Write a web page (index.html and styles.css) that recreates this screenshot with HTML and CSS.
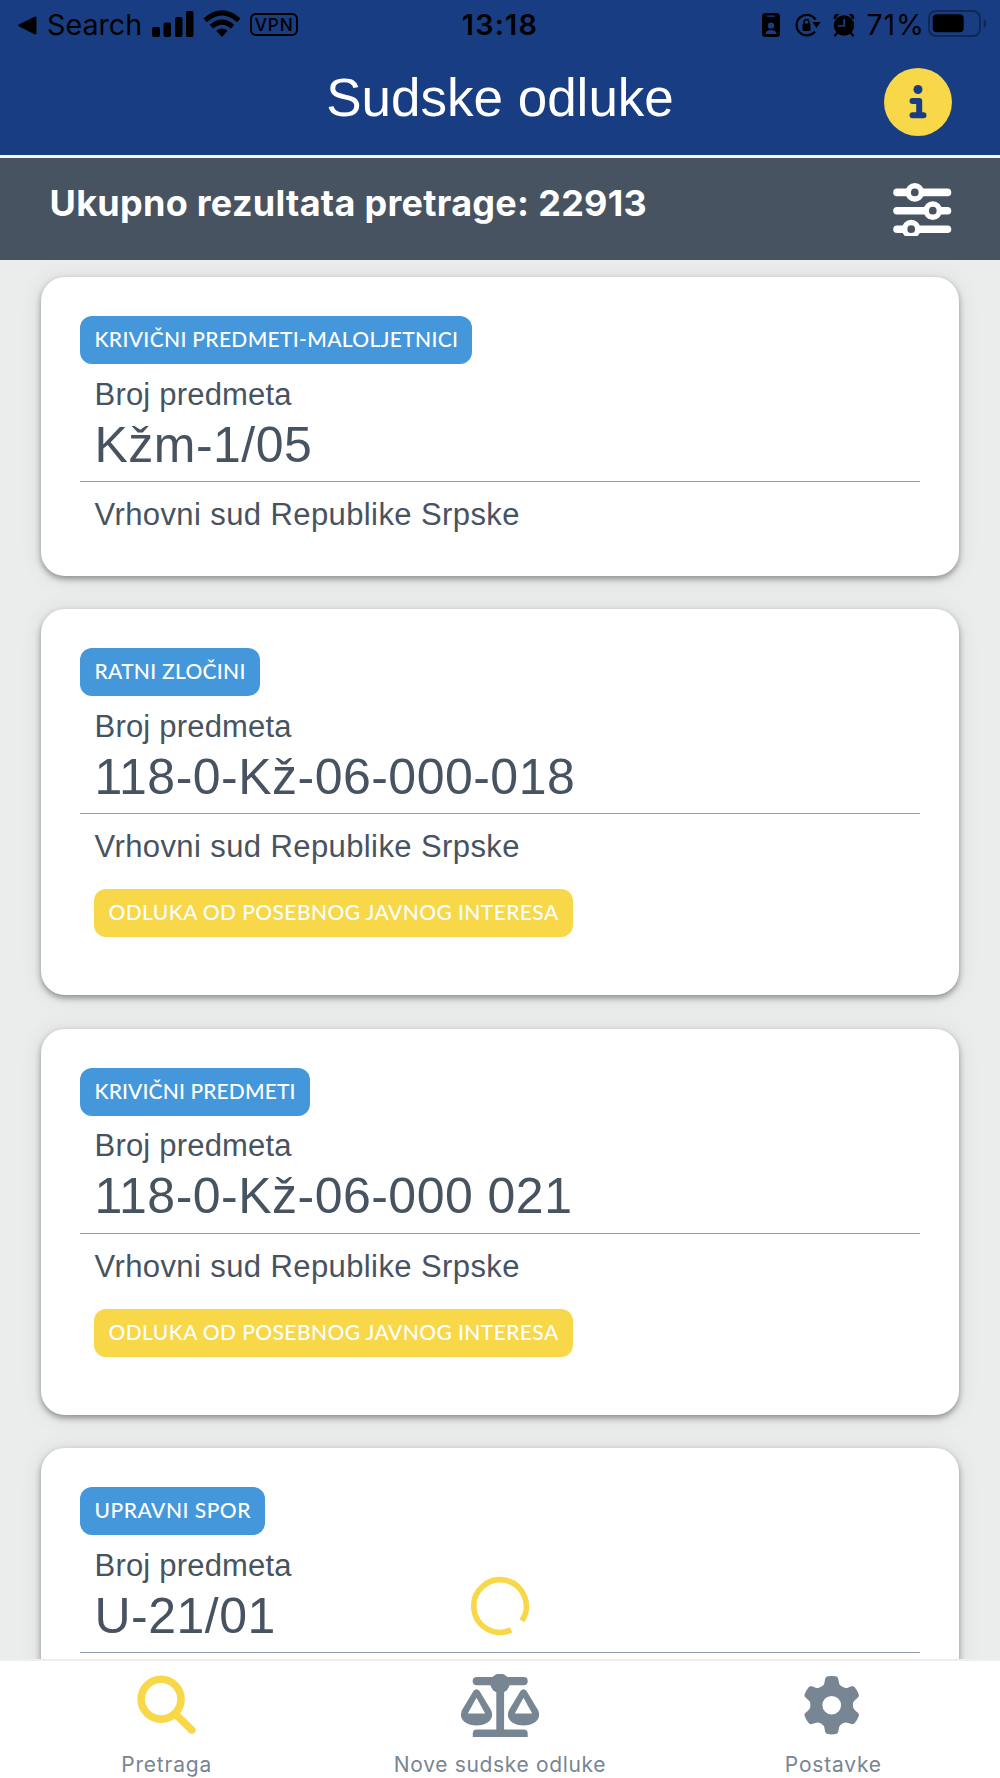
FILE: index.html
```html
<!DOCTYPE html>
<html lang="bs">
<head>
<meta charset="utf-8">
<title>Sudske odluke</title>
<link rel="stylesheet" href="styles.css">
</head>
<body>
<div class="app">
  <header class="header">
    <div class="status">
      <div class="status-left">
        <svg class="back" width="19" height="19" viewBox="0 0 19 19"><path d="M1.2 8.3 16.5.8Q18.5 0 18.5 2V17Q18.5 19 16.5 18.2L1.2 10.5Q-.6 9.4 1.2 8.3Z"/></svg>
        <span class="search">Search</span>
        <svg class="signal" width="42" height="27" viewBox="0 0 42 27"><rect x="0" y="16" width="8" height="10" rx="2"/><rect x="11.5" y="11.5" width="7.5" height="14.5" rx="2"/><rect x="23" y="6" width="7.5" height="20" rx="2"/><rect x="34" y="0" width="7.5" height="26" rx="2"/></svg>
        <svg class="wifi" width="38" height="27" viewBox="0 0 38 27"><g fill="none" stroke="#000" stroke-width="5.2"><path d="M2.2 10.4Q19-4.6 35.8 10.4"/><path d="M8.4 16.8Q19 7.4 29.6 16.8"/></g><path d="M13.3 20.8Q19 16.2 24.7 20.8L20 26Q19 27 18 26Z"/></svg>
        <span class="vpn">VPN</span>
      </div>
      <div class="time">13:18</div>
      <div class="status-right">
        <svg width="18" height="24" viewBox="0 0 18 24"><rect width="18" height="24" rx="3.5"/><rect x="5" y="2.5" width="8" height="1.3" rx=".6" fill="#193d82"/><circle cx="9" cy="12.6" r="3.2" fill="#193d82"/><path d="M3.5 21Q4 17 9 17T14.500 21Z" fill="#193d82"/></svg>
        <svg class="lock" width="26" height="24" viewBox="0 0 26 24"><path d="M20.500 6.500A10.300 10.300 0 1 0 20 18.500" fill="none" stroke="#000" stroke-width="2.200"/><path d="M17.500 9H25.500L21.500 15Z"/><rect x="7.500" y="10.500" width="8" height="7.500" rx="1.200"/><path d="M9.200 11V8.700a2.300 2.300 0 0 1 4.600 0V11" fill="none" stroke="#000" stroke-width="1.500"/></svg>
        <svg class="alarm" width="22" height="24" viewBox="0 0 22 24"><circle cx="11" cy="12.500" r="10.200"/><path d="M.8 6Q-.2 1 5 .8L6 1.600 1.700 6.600ZM21.200 6Q22.200 1 17 .8L16 1.600 20.300 6.600Z"/><path d="m4.500 19.500-2.500 3m15.500-3 2.500 3" stroke="#000" stroke-width="2.200" stroke-linecap="round"/><path d="M11.200 6.500V13H5.500" fill="none" stroke="#193d82" stroke-width="1.700" stroke-linecap="round"/></svg>
        <span class="percent">71%</span>
        <svg class="battery" width="59" height="28" viewBox="0 0 59 28"><rect x="1" y="1" width="51" height="25" rx="7" fill="none" stroke="#0f2855" stroke-width="2"/><rect x="4.700" y="4.300" width="31" height="18" rx="4"/><path d="M55.700 9Q58.500 10.500 58.500 13.500T55.700 18.500Z" fill="#0f2855"/></svg>
      </div>
    </div>
    <div class="titlebar">
      <h1>Sudske odluke</h1>
      <svg class="info" width="68" height="68" viewBox="0 0 68 68"><circle cx="34" cy="34" r="34" fill="#f8d748"/><circle cx="34" cy="21.500" r="4.500" fill="#193d82"/><path d="M28.500 33H35.200V47.300M28.500 47.300H39.500" fill="none" stroke="#193d82" stroke-width="6" stroke-linecap="round" stroke-linejoin="round"/></svg>
    </div>
  </header>

  <section class="summary">
    <h2>Ukupno rezultata pretrage: 22913</h2>
    <svg class="filter" width="59" height="53" viewBox="0 0 59 53"><g stroke="#fff" stroke-width="7.600" stroke-linecap="round"><path d="M4 9.400H54.500M4 27.700H54.500M4 46.200H54.500"/></g><g fill="#475361" stroke="#fff" stroke-width="5.500"><circle cx="21.800" cy="9.400" r="6.600"/><circle cx="39.800" cy="27.700" r="6.600"/><circle cx="18.200" cy="46.200" r="6.600"/></g></svg>
  </section>

  <main class="list">
    <article class="card">
      <span class="badge">KRIVIČNI PREDMETI-MALOLJETNICI</span>
      <div class="case"><div class="label">Broj predmeta</div><div class="number">Kžm-1/05</div></div>
      <div class="court">Vrhovni sud Republike Srpske</div>
    </article>
    <article class="card featured">
      <span class="badge war">RATNI ZLOČINI</span>
      <div class="case"><div class="label">Broj predmeta</div><div class="number">118-0-Kž-06-000-018</div></div>
      <div class="court">Vrhovni sud Republike Srpske</div>
      <span class="badge interest">ODLUKA OD POSEBNOG JAVNOG INTERESA</span>
    </article>
    <article class="card featured">
      <span class="badge criminal">KRIVIČNI PREDMETI</span>
      <div class="case"><div class="label">Broj predmeta</div><div class="number">118-0-Kž-06-000 021</div></div>
      <div class="court">Vrhovni sud Republike Srpske</div>
      <span class="badge interest">ODLUKA OD POSEBNOG JAVNOG INTERESA</span>
    </article>
    <article class="card">
      <span class="badge admin">UPRAVNI SPOR</span>
      <div class="case"><div class="label">Broj predmeta</div><div class="number">U-21/01</div></div>
    </article>
  </main>

  <svg class="spinner" width="60" height="60" viewBox="0 0 60 60"><path d="M51.800 44.800A26.300 26.300 0 1 0 41.100 53.900" fill="none" stroke="#f8d748" stroke-width="5.600"/></svg>

  <nav class="tabs">
    <a class="tab">
      <svg width="60" height="63" viewBox="0.7 0.5 60 63"><circle cx="24.800" cy="25.700" r="19.900" fill="none" stroke="#f8d748" stroke-width="7.600"/><path d="M39.500 41 55.500 56.500" stroke="#f8d748" stroke-width="7.600" stroke-linecap="round"/></svg>
      <span>Pretraga</span>
    </a>
    <a class="tab">
      <svg width="78" height="63" viewBox="0 0 78 63" fill="#788592"><rect x="11.700" y="3" width="55" height="8.300" rx="4.100"/><circle cx="39" cy="9.300" r="9.700"/><rect x="35.300" y="9" width="7.800" height="50"/><path d="M15.800 55.500H62.700Q66.700 55.500 66.700 59.500V63H11.800V59.500Q11.800 55.500 15.800 55.500Z"/><path id="pan" fill-rule="evenodd" d="M12.500 17Q15.500 13.500 18.500 17L30 36Q31.500 39 31 42.500C29.500 48.500 22.500 51.500 15.500 51.500S1.500 48.500 0 42.500Q-.3 39 1 36ZM15.500 23.800 6.800 39.500H24.200Z"/><use href="#pan" x="47"/></svg>
      <span class="new">Nove sudske odluke</span>
    </a>
    <a class="tab">
      <svg width="60" height="63" viewBox="-28.700 -31.200 60 63" fill="#788592"><g id="teeth"><path id="tooth" d="M-12.500-17.500Q-7.500-18.500-7-24L-6.500-26.500Q-6-28.700-4-28.900Q0-29.500 4-28.900Q6-28.700 6.500-26.500L7-24Q7.500-18.500 12.500-17.500L10 0H-10Z"/><use href="#tooth" transform="rotate(60)"/><use href="#tooth" transform="rotate(120)"/></g><use href="#teeth" transform="rotate(180)"/><circle r="9.300" fill="#fff"/></svg>
      <span>Postavke</span>
    </a>
  </nav>
</div>
</body>
</html>
```
FILE: styles.css
```css
* { box-sizing: border-box; }

body {
  margin: 0;
  font-family: "Liberation Sans", Arial, sans-serif;
  background: #ebedec;
}

svg { display: block; flex: none; }

h1, h2 { margin: 0; }

.app {
  position: relative;
  display: flex;
  flex-direction: column;
  width: 1000px;
  height: 1778px;
  overflow: hidden;
}

.header {
  flex: none;
  height: 158px;
  background: #193d82;
  border-bottom: 3px solid #f6f6f9;
}

.status {
  display: grid;
  grid-template-columns: 1fr auto 1fr;
  align-items: center;
  height: 50px;
  font-family: Inter, sans-serif;
  color: #000;
}

.status-left, .status-right { display: flex; align-items: center; height: 50px; }
.status-left { padding-left: 18px; }
.status-right { justify-content: flex-end; padding-right: 13px; }

.search { margin-left: 10px; font-size: 28.7px; line-height: 50px; }
.signal { margin-left: 10px; margin-top: -1px; }
.wifi { margin-left: 9px; margin-top: -3px; }

.vpn {
  width: 48px;
  height: 23px;
  margin-left: 9px;
  margin-top: -2px;
  border: 2px solid #000;
  border-radius: 6px;
  font-size: 17.3px;
  font-weight: 500;
  line-height: 19px;
  letter-spacing: 0.8px;
  text-align: center;
}

.time { font-size: 28.8px; font-weight: 600; line-height: 50px; letter-spacing: 1.2px; }

.lock { margin-left: 15px; }
.alarm { margin-left: 12px; }
.percent { margin-left: 12px; font-size: 28.4px; line-height: 50px; letter-spacing: 1px; }
.battery { margin-left: 3px; margin-top: -2px; }

.titlebar {
  display: grid;
  grid-template-columns: 68px 1fr 68px;
  align-items: center;
  height: 105px;
  padding: 0 48px;
}

.titlebar h1 {
  grid-column: 2;
  color: #fff;
  font-size: 53px;
  font-weight: 400;
  line-height: 60px;
  text-align: center;
  padding-bottom: 9px;
}

.info { margin-bottom: 2px; }

.summary {
  flex: none;
  display: flex;
  justify-content: space-between;
  height: 102px;
  padding: 25px 48px 0 49.5px;
  background: #475361;
  color: #fff;
}

.summary h2 {
  font-family: Inter, sans-serif;
  font-size: 36px;
  font-weight: 700;
  line-height: 40px;
  letter-spacing: 0.28px;
}

.list {
  flex: 1;
  min-height: 0;
  display: flex;
  flex-direction: column;
  gap: 33.4px;
  padding: 17px 41px 0;
  overflow: hidden;
}

.card {
  flex: none;
  height: 299px;
  padding: 39px;
  border-radius: 24px;
  background: #fff;
  box-shadow: 0 3px 6px rgba(0, 0, 0, 0.38), 0 1px 24px rgba(0, 0, 0, 0.08);
  color: #475361;
}

.featured { height: 386px; }

.badge {
  display: block;
  width: fit-content;
  height: 48px;
  padding: 0 14px 0 14.5px;
  border-radius: 12px;
  background: #4497da;
  color: #fff;
  font-family: Lato, sans-serif;
  font-size: 21px;
  font-weight: 500;
  line-height: 45px;
  letter-spacing: 0.33px;
  white-space: nowrap;
}

.war { letter-spacing: 0.28px; }
.criminal { letter-spacing: 0.12px; }
.admin { letter-spacing: 0.5px; }
.interest { margin: 22px 0 0 14px; background: #f8d748; letter-spacing: 0.4px; }

.case {
  margin-top: 10.7px;
  padding: 0 14.5px 6.3px;
  border-bottom: 1px solid #929eab;
}

.label, .court { font-size: 31px; line-height: 40px; }
.label { letter-spacing: 0.2px; }
.number { font-size: 50px; line-height: 60px; letter-spacing: 0.48px; }
.court { margin-top: 13px; padding-left: 14.5px; letter-spacing: 0.4px; }

.spinner { position: absolute; left: 470px; top: 1576px; }

.tabs {
  flex: none;
  display: grid;
  grid-template-columns: repeat(3, 1fr);
  height: 119px;
  border-top: 2px solid #eeeeee;
  background: #fff;
}

.tab {
  display: flex;
  flex-direction: column;
  align-items: center;
  padding-top: 13px;
  color: #788592;
  font-family: Inter, sans-serif;
  font-size: 21px;
  line-height: 26px;
  letter-spacing: 0.8px;
}

.tab span { margin-top: 15px; }
.tab .new { letter-spacing: 0.66px; }
```
